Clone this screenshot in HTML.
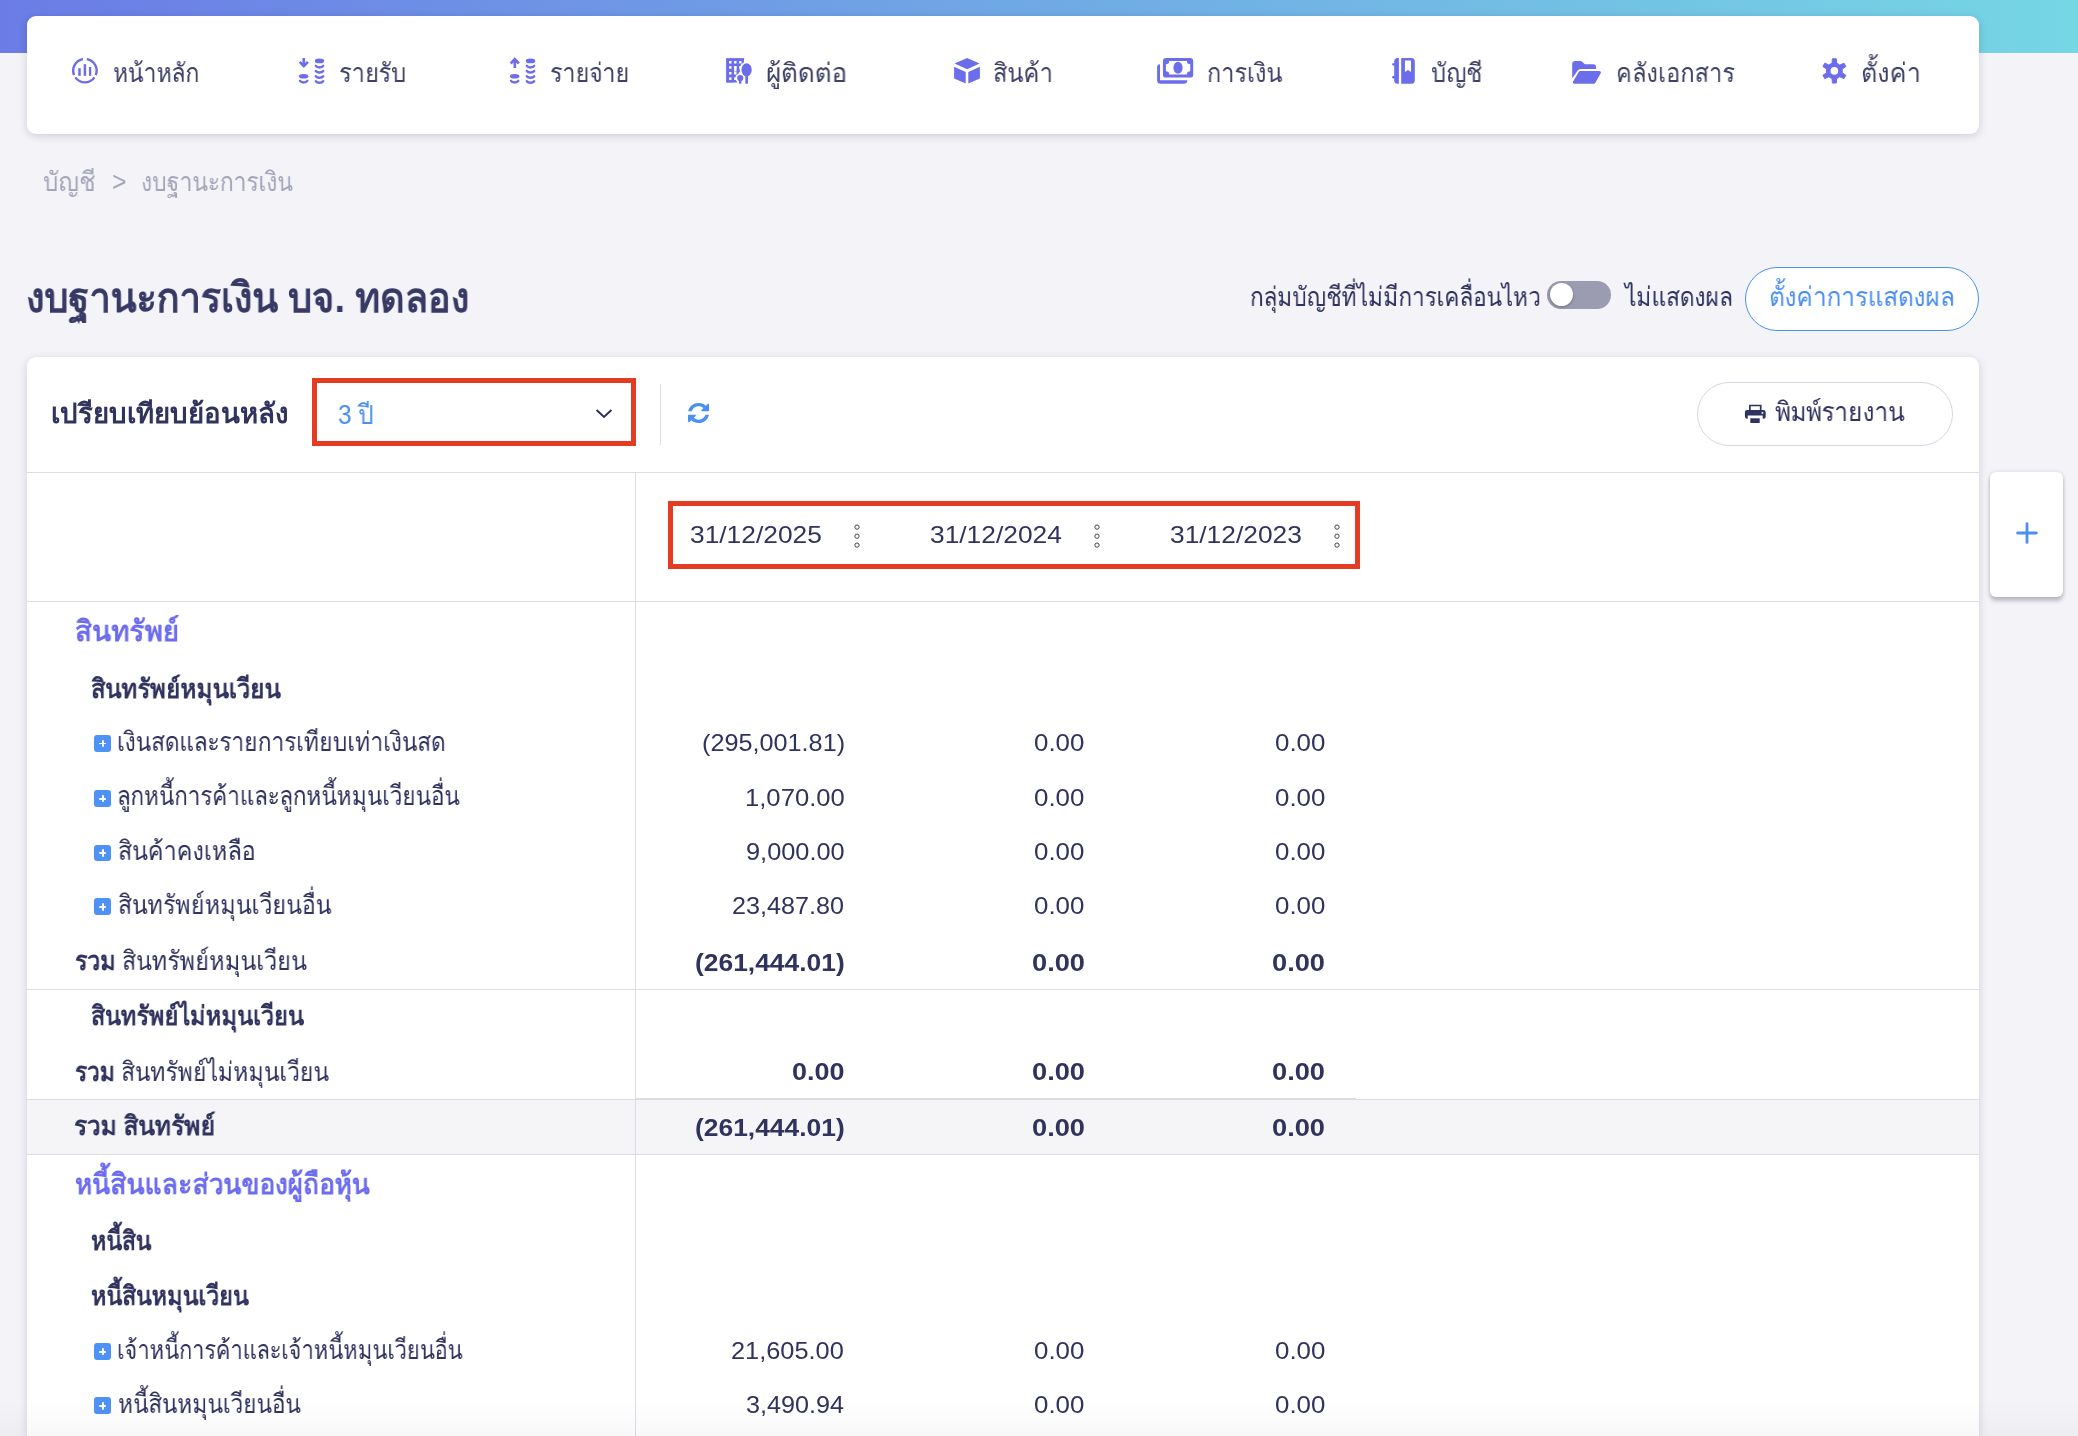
<!DOCTYPE html>
<html lang="th"><head><meta charset="utf-8"><title>งบฐานะการเงิน</title>
<style>
html,body{margin:0;padding:0}
body{width:2078px;height:1436px;background:#f3f3f8}
#root{width:2078px;height:1436px;overflow:hidden;position:relative;background:#f3f3f8;font-family:"Liberation Sans",sans-serif;color:#31335f}
.a,.t,.i{position:absolute}
.t{white-space:nowrap;transform-origin:0 50%;margin:0;will-change:transform;clip-path:inset(-40px 0 -40px -4px)}
.t b{font-weight:bold}
#hdr{left:0;top:0;width:2078px;height:53px;background:linear-gradient(90deg,#6b7ce6 0%,#75d6e4 100%)}
#nav{left:27px;top:16px;width:1952px;height:118px;background:#fff;border-radius:9px;box-shadow:0 2px 8px rgba(20,20,40,.16)}
#card{left:27px;top:357px;width:1952px;height:1079px;background:#fff;border-radius:9px 9px 0 0;box-shadow:0 2px 8px rgba(20,20,40,.16)}
.hl{height:1px;background:#dcdce9}
.vl{width:1px;background:#dcdce9}
.red{border:5px solid #e53b22;box-sizing:border-box}
.pill{box-sizing:border-box;border-radius:32px;background:#fff}
.plus{width:16.9px;height:16.9px;border-radius:3px;background:#4f92f5}
.plus:before,.plus:after{content:"";position:absolute;background:#fff}
.plus:before{left:4.7px;top:7.5px;width:7.5px;height:1.9px;border-radius:1px}
.plus:after{left:7.5px;top:4.7px;width:1.9px;height:7.5px;border-radius:1px}
</style></head><body>
<div id="root">

<div class="a" id="hdr"></div>
<div class="a" id="nav"></div>
<svg class="i" style="left:70px;top:56px" width="30" height="30" viewBox="0 0 30 30">
<g fill="none" stroke="#6c6dea" stroke-width="2.4" stroke-linecap="butt">
<path d="M4.05 19.08 A11.7 11.7 0 0 1 13.01 3.15"/><path d="M16.79 3.15 A11.7 11.7 0 0 1 25.75 19.08"/><path d="M24.48 21.41 A11.7 11.7 0 0 1 5.32 21.41"/>
</g><g fill="#6c6dea"><rect x="8.25" y="12.2" width="2.5" height="7.6"/><rect x="13.65" y="8.2" width="2.5" height="11.6"/><rect x="18.95" y="10.9" width="2.3" height="8.9"/></g></svg>
<svg class="i" style="left:290.0px;top:50px" width="50" height="40" viewBox="0 0 50 40"><g fill="none" stroke="#6c6dea" stroke-width="2.6" stroke-linecap="butt" stroke-linejoin="miter"><path d="M13.8 8.1 V15.6 M9.7 11.9 L13.8 16.2 L17.9 11.9" /></g><g fill="#6c6dea"><ellipse cx="13.65" cy="26.2" rx="4.7" ry="2.3"/><ellipse cx="29.5" cy="10.9" rx="4.7" ry="2.3"/></g><g fill="none" stroke="#6c6dea" stroke-width="2.5" stroke-linecap="round"><path d="M10 30.9 C11.4 32.9 15.9 32.9 17.3 30.9"/><path d="M25.85 15.90 C27.25 17.90 31.75 17.90 33.15 15.90"/><path d="M25.85 21.05 C27.25 23.05 31.75 23.05 33.15 21.05"/><path d="M25.85 26.20 C27.25 28.20 31.75 28.20 33.15 26.20"/><path d="M25.85 31.25 C27.25 33.25 31.75 33.25 33.15 31.25"/></g></svg>
<svg class="i" style="left:500.5px;top:50px" width="50" height="40" viewBox="0 0 50 40"><g fill="none" stroke="#6c6dea" stroke-width="2.6" stroke-linecap="butt" stroke-linejoin="miter"><path d="M13.8 18.1 V9.6 M9.7 13.5 L13.8 9.2 L17.9 13.5" /></g><g fill="#6c6dea"><ellipse cx="13.65" cy="26.2" rx="4.7" ry="2.3"/><ellipse cx="29.5" cy="10.9" rx="4.7" ry="2.3"/></g><g fill="none" stroke="#6c6dea" stroke-width="2.5" stroke-linecap="round"><path d="M10 30.9 C11.4 32.9 15.9 32.9 17.3 30.9"/><path d="M25.85 15.90 C27.25 17.90 31.75 17.90 33.15 15.90"/><path d="M25.85 21.05 C27.25 23.05 31.75 23.05 33.15 21.05"/><path d="M25.85 26.20 C27.25 28.20 31.75 28.20 33.15 26.20"/><path d="M25.85 31.25 C27.25 33.25 31.75 33.25 33.15 31.25"/></g></svg>
<svg class="i" style="left:715px;top:50px" width="50" height="40" viewBox="0 0 50 40"><rect x="11.1" y="8.1" width="17.9" height="24.6" fill="#6c6dea"/><rect x="14.1" y="11.0" width="2.4" height="2.5" fill="#fff"/><rect x="14.1" y="16.2" width="2.4" height="2.5" fill="#fff"/><rect x="14.1" y="22.0" width="2.4" height="2.5" fill="#fff"/><rect x="14.1" y="27.4" width="2.4" height="2.5" fill="#fff"/><rect x="19.1" y="11.0" width="2.4" height="2.5" fill="#fff"/><rect x="19.1" y="16.2" width="2.4" height="2.5" fill="#fff"/><rect x="19.1" y="22.0" width="2.4" height="2.5" fill="#fff"/><rect x="19.1" y="27.4" width="2.4" height="2.5" fill="#fff"/><rect x="24.1" y="11.0" width="2.4" height="2.5" fill="#fff"/><rect x="24.1" y="16.2" width="2.4" height="2.5" fill="#fff"/><rect x="24.1" y="22.0" width="2.4" height="2.5" fill="#fff"/><rect x="24.1" y="27.4" width="2.4" height="2.5" fill="#fff"/><rect x="19.1" y="16.2" width="2.4" height="5.4" fill="#fff"/><g fill="#fff" stroke="#fff" stroke-width="3.6"><ellipse cx="31.6" cy="19.8" rx="5.15" ry="6.5"/><rect x="30.3" y="24" width="2.7" height="9.7"/><circle cx="25.2" cy="28.1" r="3.1"/><path d="M24 30 L26.4 30 L26.2 33.7 L24.2 33.7Z"/></g><rect x="18.5" y="32.7" width="20" height="4" fill="#fff"/><rect x="25.5" y="27" width="5" height="6" fill="#fff"/><g fill="#6c6dea"><ellipse cx="31.6" cy="19.8" rx="5.15" ry="6.5"/><rect x="30.3" y="24" width="2.7" height="9.7"/><circle cx="25.2" cy="28.1" r="3.1"/><path d="M23.9 30 L26.5 30 L26.3 33.7 L24.1 33.7Z"/></g></svg>
<svg class="i" style="left:942px;top:50px" width="50" height="40" viewBox="0 0 50 40"><g fill="#6c6dea"><path d="M12.5 13.5 L25.1 7.9 L37.6 13.5 L25.1 19.2Z"/><path d="M12.1 16.7 L23.7 22 V33.4 L12.1 28.4Z"/><path d="M26.3 22 L37.9 16.7 V28.4 L26.3 33.4Z"/></g></svg>
<svg class="i" style="left:1150px;top:50px" width="50" height="40" viewBox="0 0 50 40"><rect x="12.95" y="8.1" width="30.25" height="19.5" rx="3.2" fill="#6c6dea"/><path fill="#fff" d="M19.2 11 H36.95 A3.3 3.3 0 0 0 40.25 14.3 V21.2 A3.3 3.3 0 0 0 36.95 24.5 H19.2 A3.3 3.3 0 0 0 15.9 21.2 V14.3 A3.3 3.3 0 0 0 19.2 11Z"/><ellipse cx="28" cy="17.8" rx="4.6" ry="6.05" fill="#6c6dea"/><path fill="#6c6dea" d="M10 14.2 V30.2 H37.3 A3.6 3.6 0 0 1 33.7 33.8 H10.6 A3.5 3.5 0 0 1 7.1 30.3 V17.1 A2.9 2.9 0 0 1 10 14.2Z"/></svg>
<svg class="i" style="left:1380px;top:50px" width="50" height="40" viewBox="0 0 50 40"><g fill="#6c6dea"><path d="M18.9 8.1 H17.7 A3.5 3.5 0 0 0 14.2 11.6 V30.3 A3.5 3.5 0 0 0 17.7 33.8 H18.9Z"/><rect x="12" y="13.2" width="4" height="2.3" rx="1.15"/><rect x="12" y="26.1" width="4" height="2.3" rx="1.15"/><path d="M21.2 8.1 H31.3 A3.5 3.5 0 0 1 34.8 11.6 V30.3 A3.5 3.5 0 0 1 31.3 33.8 H21.2Z"/></g><path fill="#fff" d="M24.9 10.4 H31.05 V22.1 L27.97 19.9 L24.9 22.1Z"/></svg>
<svg class="i" style="left:1562px;top:50px" width="50" height="40" viewBox="0 0 50 40"><g fill="#6c6dea"><path d="M10.2 13.9 A2.9 2.9 0 0 1 13.1 11 H19.2 L22.9 14.2 H31.1 A3 3 0 0 1 34.1 17.2 V18.95 H18.8 Q16.6 18.95 15.5 20.8 L10.2 28.4Z"/><path stroke="#6c6dea" stroke-width="3" stroke-linejoin="round" d="M18.2 22.4 H37.4 L31.9 32.35 H12.4Z"/></g></svg>
<svg class="i" style="left:1810px;top:50px" width="50" height="40" viewBox="0 0 50 40"><path fill="#6c6dea" stroke="#6c6dea" stroke-width="1" stroke-linejoin="round" d="M22.06 13.35 L22.42 8.75 L26.32 8.75 L26.68 13.35 A7.90 7.90 0 0 1 29.76 15.12 L33.92 13.14 L35.86 16.51 L32.07 19.12 A7.90 7.90 0 0 1 32.07 22.68 L35.86 25.29 L33.92 28.66 L29.76 26.68 A7.90 7.90 0 0 1 26.68 28.45 L26.32 33.05 L22.42 33.05 L22.06 28.45 A7.90 7.90 0 0 1 18.98 26.68 L14.82 28.66 L12.88 25.29 L16.67 22.68 A7.90 7.90 0 0 1 16.67 19.12 L12.88 16.51 L14.82 13.14 L18.98 15.12 A7.90 7.90 0 0 1 22.06 13.35 Z"/><circle cx="24.37" cy="20.90" r="3.8" fill="#fff"/></svg>
<div class="a" style="left:1547px;top:280.5px;width:64px;height:28.5px;border-radius:15px;background:#9b9cb2"></div>
<div class="a" style="left:1550px;top:283px;width:23px;height:23px;border-radius:50%;background:#fff;box-shadow:0 1px 3px rgba(0,0,0,.3)"></div>
<div class="a pill" style="left:1745px;top:267px;width:234px;height:64px;border:1.3px solid #4a8ff2"></div>
<div class="a" id="card"></div>
<div class="a red" style="left:312px;top:378px;width:324px;height:68px"></div>
<svg class="i" style="left:594px;top:407px" width="20" height="14" viewBox="0 0 20 14"><path d="M2.6 2.9 L10 9.9 L17.4 2.9" fill="none" stroke="#2f3158" stroke-width="2"/></svg>
<div class="a vl" style="left:660px;top:384px;height:61px"></div>
<svg class="i" style="left:687.60px;top:402.60px" width="21.20" height="20.00" viewBox="0 0 1536 1536" preserveAspectRatio="none"><path fill="#4a8ff2" transform="translate(0,1408) scale(1,-1)" d="M1511 480C1511 497 1497 512 1479 512H1287C1272 512 1262 503 1257 489C1240 449 1228 411 1204 372C1111 220 946 128 768 128C639 128 514 178 420 266L557 403C569 415 576 431 576 448C576 483 547 512 512 512H64C29 512 0 483 0 448V0C0 -35 29 -64 64 -64C81 -64 97 -57 109 -45L238 84C380 -51 569 -128 764 -128C1133 -128 1425 119 1510 473C1511 475 1511 478 1511 480ZM1536 1280C1536 1315 1507 1344 1472 1344C1455 1344 1439 1337 1427 1325L1297 1196C1155 1330 964 1408 768 1408C399 1408 104 1162 18 807C18 805 18 802 18 800C18 783 32 768 50 768H249C264 768 274 777 279 791C296 831 308 869 332 908C425 1060 590 1152 768 1152C897 1152 1022 1103 1117 1015L979 877C967 865 960 849 960 832C960 797 989 768 1024 768H1472C1507 768 1536 797 1536 832Z"/></svg>
<div class="a pill" style="left:1697px;top:382px;width:256px;height:64px;border:1px solid #d6d6e4"></div>
<svg class="i" style="left:1735px;top:395px" width="40" height="37" viewBox="0 0 40 37"><g fill="#31335f"><path d="M14.05 9.65 H26.55 V15.6 H24.85 V11.3 H15.75 V15.6 H14.05Z"/><path d="M12.1 15.1 H28.5 A2.2 2.2 0 0 1 30.7 17.3 V21.5 A2.2 2.2 0 0 1 28.5 23.7 H27.7 V20.6 H12.75 V23.7 H12.1 A2.2 2.2 0 0 1 9.9 21.5 V17.3 A2.2 2.2 0 0 1 12.1 15.1Z"/><rect x="15.3" y="23.3" width="9.4" height="4.7"/></g><circle cx="27.45" cy="17.9" r="0.95" fill="#fff"/></svg>
<div class="a hl" style="left:27px;top:472px;width:1952px"></div>
<div class="a vl" style="left:635px;top:473px;height:963px"></div>
<div class="a hl" style="left:27px;top:601px;width:1952px"></div>
<div class="a red" style="left:668px;top:501px;width:692px;height:68px"></div>
<svg class="i" style="left:852.4px;top:521px" width="10" height="30" viewBox="0 0 10 30"><g fill="none" stroke="#333" stroke-width="0.9"><circle cx="5" cy="6.1" r="2.15"/><circle cx="5" cy="15.2" r="2.15"/><circle cx="5" cy="24.1" r="2.15"/></g></svg>
<svg class="i" style="left:1092.4px;top:521px" width="10" height="30" viewBox="0 0 10 30"><g fill="none" stroke="#333" stroke-width="0.9"><circle cx="5" cy="6.1" r="2.15"/><circle cx="5" cy="15.2" r="2.15"/><circle cx="5" cy="24.1" r="2.15"/></g></svg>
<svg class="i" style="left:1332.4px;top:521px" width="10" height="30" viewBox="0 0 10 30"><g fill="none" stroke="#333" stroke-width="0.9"><circle cx="5" cy="6.1" r="2.15"/><circle cx="5" cy="15.2" r="2.15"/><circle cx="5" cy="24.1" r="2.15"/></g></svg>
<div class="a hl" style="left:27px;top:989px;width:1952px"></div>
<div class="a" style="left:27px;top:1099px;width:1952px;height:56px;background:#f5f5f8"></div>
<div class="a hl" style="left:27px;top:1099px;width:1952px"></div>
<div class="a hl" style="left:635px;top:1098px;width:721px"></div>
<div class="a hl" style="left:27px;top:1154px;width:1952px"></div>
<div class="a vl" style="left:635px;top:1099px;height:56px"></div>
<div class="a plus" style="left:94.2px;top:735.0px"></div>
<div class="a plus" style="left:94.2px;top:790.2px"></div>
<div class="a plus" style="left:94.2px;top:844.6px"></div>
<div class="a plus" style="left:94.2px;top:898.4px"></div>
<div class="a plus" style="left:94.2px;top:1343.2px"></div>
<div class="a plus" style="left:94.2px;top:1397.4px"></div>
<div class="a" style="left:1990px;top:472px;width:73px;height:125px;background:#fff;border-radius:6px;box-shadow:0 4px 4px rgba(20,20,40,.24),0 0 4px rgba(20,20,40,.12)"></div>
<svg class="i" style="left:2013.5px;top:520.4px" width="26" height="26" viewBox="0 0 26 26"><path d="M13 3.6 V22.4 M3.6 13 H22.4" stroke="#4a8ff2" stroke-width="2.8" stroke-linecap="round"/></svg>
<div class="a" style="left:0;top:1398px;width:2078px;height:38px;background:linear-gradient(180deg,rgba(0,0,0,0),rgba(0,0,0,.028))"></div>
<div class="t" id="n1" style="left:112.93px;top:59.80px;font-size:26.38px;line-height:26.38px;color:#3f4167;transform:scaleX(0.8719);width:100.0px;">หน้าหลัก</div>
<div class="t" id="n2" style="left:338.90px;top:59.80px;font-size:26.38px;line-height:26.38px;color:#3f4167;transform:scaleX(0.8986);width:76.0px;">รายรับ</div>
<div class="t" id="n3" style="left:549.71px;top:59.80px;font-size:26.38px;line-height:26.38px;color:#3f4167;transform:scaleX(0.8860);width:90.0px;">รายจ่าย</div>
<div class="t" id="n4" style="left:765.72px;top:59.80px;font-size:26.38px;line-height:26.38px;color:#3f4167;transform:scaleX(0.9923);width:83.0px;">ผู้ติดต่อ</div>
<div class="t" id="n5" style="left:993.21px;top:59.80px;font-size:26.38px;line-height:26.38px;color:#3f4167;transform:scaleX(0.8968);width:67.0px;">สินค้า</div>
<div class="t" id="n6" style="left:1206.92px;top:59.80px;font-size:26.38px;line-height:26.38px;color:#3f4167;transform:scaleX(0.8878);width:87.0px;">การเงิน</div>
<div class="t" id="n7" style="left:1431.10px;top:59.80px;font-size:26.38px;line-height:26.38px;color:#3f4167;transform:scaleX(0.9018);width:59.0px;">บัญชี</div>
<div class="t" id="n8" style="left:1615.91px;top:59.80px;font-size:26.38px;line-height:26.38px;color:#3f4167;transform:scaleX(0.8938);width:135.0px;">คลังเอกสาร</div>
<div class="t" id="n9" style="left:1860.99px;top:59.80px;font-size:26.38px;line-height:26.38px;color:#3f4167;transform:scaleX(0.9534);width:63.0px;">ตั้งค่า</div>
<div class="t" id="c1" style="left:42.89px;top:168.50px;font-size:26.72px;line-height:26.72px;color:#a3a5b9;transform:scaleX(0.9054);width:60.0px;">บัญชี</div>
<div class="t" id="c2" style="left:111.58px;top:168.82px;font-size:26.72px;line-height:26.72px;color:#a3a5b9;transform:scaleX(0.9231);width:17.0px;">&gt;</div>
<div class="t" id="c3" style="left:140.79px;top:168.50px;font-size:26.72px;line-height:26.72px;color:#a3a5b9;transform:scaleX(0.8571);width:180.0px;">งบฐานะการเงิน</div>
<div class="t" id="title" style="left:25.66px;top:277.50px;font-size:41.38px;line-height:41.38px;color:#383a65;font-weight:bold;transform:scaleX(0.9195);width:483.0px;">งบฐานะการเงิน บจ. ทดลอง</div>
<div class="t" id="tg1" style="left:1249.60px;top:283.50px;font-size:26.72px;line-height:26.72px;color:#31335f;transform:scaleX(0.8481);width:344.0px;">กลุ่มบัญชีที่ไม่มีการเคลื่อนไหว</div>
<div class="t" id="tg2" style="left:1624.71px;top:283.50px;font-size:26.72px;line-height:26.72px;color:#31335f;transform:scaleX(0.8556);width:127.0px;">ไม่แสดงผล</div>
<div class="t" id="btn1" style="left:1769.17px;top:283.90px;font-size:26.72px;line-height:26.72px;color:#4a8ff2;transform:scaleX(0.9146);width:204.0px;">ตั้งค่าการแสดงผล</div>
<div class="t" id="cmp" style="left:51.30px;top:399.50px;font-size:27.59px;line-height:27.59px;color:#31335f;font-weight:bold;transform:scaleX(1.0004);width:239.0px;">เปรียบเทียบย้อนหลัง</div>
<div class="t" id="sel" style="left:338.19px;top:401.50px;font-size:26.72px;line-height:26.72px;color:#4a8ff2;transform:scaleX(0.9139);width:40.0px;">3 ปี</div>
<div class="t" id="prt" style="left:1774.89px;top:398.50px;font-size:26.55px;line-height:26.55px;color:#31335f;transform:scaleX(0.9128);width:145.0px;">พิมพ์รายงาน</div>
<div class="t" id="d0" style="left:690.43px;top:523.20px;font-size:24.71px;line-height:24.71px;color:#31335f;transform:scaleX(1.0664);width:126.0px;">31/12/2025</div>
<div class="t" id="d1" style="left:930.43px;top:523.20px;font-size:24.71px;line-height:24.71px;color:#31335f;transform:scaleX(1.0664);width:126.0px;">31/12/2024</div>
<div class="t" id="d2" style="left:1170.43px;top:523.20px;font-size:24.71px;line-height:24.71px;color:#31335f;transform:scaleX(1.0664);width:126.0px;">31/12/2023</div>
<div class="t" id="r1" style="left:74.95px;top:617.00px;font-size:28.97px;line-height:28.97px;color:#6b6cf0;font-weight:bold;transform:scaleX(0.9546);width:112.0px;">สินทรัพย์</div>
<div class="t" id="r2" style="left:90.51px;top:675.50px;font-size:26.72px;line-height:26.72px;color:#31335f;font-weight:bold;transform:scaleX(0.8948);width:215.0px;">สินทรัพย์หมุนเวียน</div>
<div class="t" id="r3" style="left:117.29px;top:729.00px;font-size:26.72px;line-height:26.72px;color:#31335f;transform:scaleX(0.8530);width:386.0px;">เงินสดและรายการเทียบเท่าเงินสด</div>
<div class="t" id="r4" style="left:116.92px;top:783.40px;font-size:26.72px;line-height:26.72px;color:#31335f;transform:scaleX(0.8417);width:410.0px;">ลูกหนี้การค้าและลูกหนี้หมุนเวียนอื่น</div>
<div class="t" id="r5" style="left:117.72px;top:837.70px;font-size:26.72px;line-height:26.72px;color:#31335f;transform:scaleX(0.8766);width:158.0px;">สินค้าคงเหลือ</div>
<div class="t" id="r6" style="left:117.73px;top:891.90px;font-size:26.72px;line-height:26.72px;color:#31335f;transform:scaleX(0.8673);width:249.0px;">สินทรัพย์หมุนเวียนอื่น</div>
<div class="t" id="r7" style="left:74.53px;top:948.40px;font-size:26.72px;line-height:26.72px;color:#31335f;transform:scaleX(0.8713);width:269.0px;"><b>รวม</b> สินทรัพย์หมุนเวียน</div>
<div class="t" id="r8" style="left:90.52px;top:1002.50px;font-size:26.72px;line-height:26.72px;color:#31335f;font-weight:bold;transform:scaleX(0.8760);width:246.0px;">สินทรัพย์ไม่หมุนเวียน</div>
<div class="t" id="r9" style="left:74.54px;top:1058.60px;font-size:26.72px;line-height:26.72px;color:#31335f;transform:scaleX(0.8551);width:300.0px;"><b>รวม</b> สินทรัพย์ไม่หมุนเวียน</div>
<div class="t" id="r10" style="left:74.48px;top:1112.50px;font-size:26.72px;line-height:26.72px;color:#31335f;font-weight:bold;transform:scaleX(0.9178);width:156.0px;">รวม สินทรัพย์</div>
<div class="t" id="r11" style="left:75.30px;top:1169.70px;font-size:28.97px;line-height:28.97px;color:#6b6cf0;font-weight:bold;transform:scaleX(0.9046);width:329.0px;">หนี้สินและส่วนของผู้ถือหุ้น</div>
<div class="t" id="r12" style="left:91.14px;top:1228.40px;font-size:26.72px;line-height:26.72px;color:#31335f;font-weight:bold;transform:scaleX(0.8609);width:73.0px;">หนี้สิน</div>
<div class="t" id="r13" style="left:91.13px;top:1282.70px;font-size:26.72px;line-height:26.72px;color:#31335f;font-weight:bold;transform:scaleX(0.8663);width:185.0px;">หนี้สินหมุนเวียน</div>
<div class="t" id="r14" style="left:117.37px;top:1337.20px;font-size:26.72px;line-height:26.72px;color:#31335f;transform:scaleX(0.8166);width:426.0px;">เจ้าหนี้การค้าและเจ้าหนี้หมุนเวียนอื่น</div>
<div class="t" id="r15" style="left:118.15px;top:1391.00px;font-size:26.72px;line-height:26.72px;color:#31335f;transform:scaleX(0.8456);width:219.0px;">หนี้สินหมุนเวียนอื่น</div>
<div class="t" id="va1" style="left:702.03px;top:732.20px;font-size:23.69px;line-height:23.69px;color:#31335f;transform:scaleX(1.0652);width:136.0px;">(295,001.81)</div>
<div class="t" id="va2" style="left:1034.31px;top:732.20px;font-size:23.69px;line-height:23.69px;color:#31335f;transform:scaleX(1.0932);width:48.0px;">0.00</div>
<div class="t" id="va3" style="left:1274.51px;top:732.20px;font-size:23.69px;line-height:23.69px;color:#31335f;transform:scaleX(1.0932);width:48.0px;">0.00</div>
<div class="t" id="vb1" style="left:745.24px;top:786.90px;font-size:23.69px;line-height:23.69px;color:#31335f;transform:scaleX(1.0820);width:94.0px;">1,070.00</div>
<div class="t" id="vb2" style="left:1034.31px;top:786.90px;font-size:23.69px;line-height:23.69px;color:#31335f;transform:scaleX(1.0932);width:48.0px;">0.00</div>
<div class="t" id="vb3" style="left:1274.51px;top:786.90px;font-size:23.69px;line-height:23.69px;color:#31335f;transform:scaleX(1.0932);width:48.0px;">0.00</div>
<div class="t" id="vc1" style="left:746.33px;top:840.80px;font-size:23.69px;line-height:23.69px;color:#31335f;transform:scaleX(1.0700);width:94.0px;">9,000.00</div>
<div class="t" id="vc2" style="left:1034.31px;top:840.80px;font-size:23.69px;line-height:23.69px;color:#31335f;transform:scaleX(1.0932);width:48.0px;">0.00</div>
<div class="t" id="vc3" style="left:1274.51px;top:840.80px;font-size:23.69px;line-height:23.69px;color:#31335f;transform:scaleX(1.0932);width:48.0px;">0.00</div>
<div class="t" id="vd1" style="left:732.14px;top:895.40px;font-size:23.69px;line-height:23.69px;color:#31335f;transform:scaleX(1.0625);width:108.0px;">23,487.80</div>
<div class="t" id="vd2" style="left:1034.31px;top:895.40px;font-size:23.69px;line-height:23.69px;color:#31335f;transform:scaleX(1.0932);width:48.0px;">0.00</div>
<div class="t" id="vd3" style="left:1274.51px;top:895.40px;font-size:23.69px;line-height:23.69px;color:#31335f;transform:scaleX(1.0932);width:48.0px;">0.00</div>
<div class="t" id="ve1" style="left:695.49px;top:952.40px;font-size:23.69px;line-height:23.69px;color:#31335f;font-weight:bold;transform:scaleX(1.1144);width:136.0px;">(261,444.01)</div>
<div class="t" id="ve2" style="left:1031.75px;top:952.40px;font-size:23.69px;line-height:23.69px;color:#31335f;font-weight:bold;transform:scaleX(1.1500);width:48.0px;">0.00</div>
<div class="t" id="ve3" style="left:1271.95px;top:952.40px;font-size:23.69px;line-height:23.69px;color:#31335f;font-weight:bold;transform:scaleX(1.1500);width:48.0px;">0.00</div>
<div class="t" id="vf1" style="left:792.46px;top:1061.40px;font-size:23.69px;line-height:23.69px;color:#31335f;font-weight:bold;transform:scaleX(1.1386);width:48.0px;">0.00</div>
<div class="t" id="vf2" style="left:1031.75px;top:1061.40px;font-size:23.69px;line-height:23.69px;color:#31335f;font-weight:bold;transform:scaleX(1.1500);width:48.0px;">0.00</div>
<div class="t" id="vf3" style="left:1271.95px;top:1061.40px;font-size:23.69px;line-height:23.69px;color:#31335f;font-weight:bold;transform:scaleX(1.1500);width:48.0px;">0.00</div>
<div class="t" id="vg1" style="left:695.49px;top:1117.20px;font-size:23.69px;line-height:23.69px;color:#31335f;font-weight:bold;transform:scaleX(1.1144);width:136.0px;">(261,444.01)</div>
<div class="t" id="vg2" style="left:1031.75px;top:1117.20px;font-size:23.69px;line-height:23.69px;color:#31335f;font-weight:bold;transform:scaleX(1.1500);width:48.0px;">0.00</div>
<div class="t" id="vg3" style="left:1271.95px;top:1117.20px;font-size:23.69px;line-height:23.69px;color:#31335f;font-weight:bold;transform:scaleX(1.1500);width:48.0px;">0.00</div>
<div class="t" id="vh1" style="left:731.33px;top:1340.20px;font-size:23.69px;line-height:23.69px;color:#31335f;transform:scaleX(1.0702);width:108.0px;">21,605.00</div>
<div class="t" id="vh2" style="left:1034.31px;top:1340.20px;font-size:23.69px;line-height:23.69px;color:#31335f;transform:scaleX(1.0932);width:48.0px;">0.00</div>
<div class="t" id="vh3" style="left:1274.51px;top:1340.20px;font-size:23.69px;line-height:23.69px;color:#31335f;transform:scaleX(1.0932);width:48.0px;">0.00</div>
<div class="t" id="vi1" style="left:745.94px;top:1394.00px;font-size:23.69px;line-height:23.69px;color:#31335f;transform:scaleX(1.0626);width:95.0px;">3,490.94</div>
<div class="t" id="vi2" style="left:1034.31px;top:1394.00px;font-size:23.69px;line-height:23.69px;color:#31335f;transform:scaleX(1.0932);width:48.0px;">0.00</div>
<div class="t" id="vi3" style="left:1274.51px;top:1394.00px;font-size:23.69px;line-height:23.69px;color:#31335f;transform:scaleX(1.0932);width:48.0px;">0.00</div>
</div>
</body></html>
